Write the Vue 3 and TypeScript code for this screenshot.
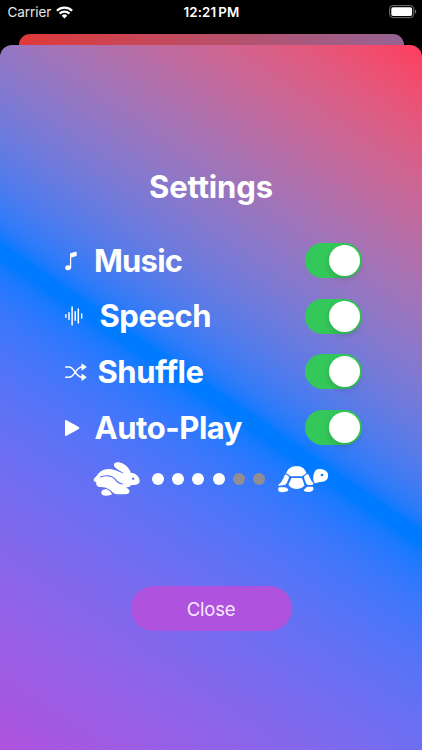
<script setup lang="ts">
import { reactive, ref } from 'vue'

interface Setting {
  id: 'music' | 'speech' | 'shuffle' | 'play'
  label: string
  on: boolean
}

const settings = reactive<Setting[]>([
  { id: 'music', label: 'Music', on: true },
  { id: 'speech', label: 'Speech', on: true },
  { id: 'shuffle', label: 'Shuffle', on: true },
  { id: 'play', label: 'Auto-Play', on: true },
])
const speed = ref(4)
const open = ref(true)
</script>

<template>
  <div class="screen">
    <header class="status">
      <div class="carrier">
        <span>Carrier</span>
        <svg class="wifi" viewBox="0 0 17 13">
          <g fill="none" stroke="#fff" stroke-width="2.3">
            <path d="M.9 4.7a10.8 10.8 0 0 1 15.2 0" />
            <path d="M3.6 7.6a7 7 0 0 1 9.8 0" />
          </g>
          <path d="M8.5 12.5 5.7 9.7a4 4 0 0 1 5.6 0z" fill="#fff" />
        </svg>
      </div>
      <span class="time">12:21<span class="meridiem">PM</span></span>
      <svg class="battery" viewBox="0 0 28 14">
        <rect x=".6" y=".6" width="24.2" height="12" rx="3.4" fill="none" stroke="#737373" />
        <rect x="2.3" y="2.2" width="20.8" height="8.8" rx="1.8" fill="#fff" />
        <path d="M26 4.6c1.7.7 1.7 3.3 0 4z" fill="#737373" />
      </svg>
    </header>
    <div class="behind"></div>
    <main v-if="open" class="sheet">
      <h1>Settings</h1>
      <section class="rows">
        <div v-for="s in settings" :key="s.id" class="row" :class="s.id">
          <svg v-if="s.id === 'music'" class="icon" viewBox="0 0 12 20">
            <ellipse cx="3.1" cy="16.7" rx="3" ry="2.5" transform="rotate(-12 3.1 16.7)" />
            <path d="M5 16.8V3.1Q5 2.2 6 2L10.7.8Q11.7.6 11.7 1.5V4.3Q11.7 5 10.9 5.2L6.2 6.4V16.8z" />
          </svg>
          <svg v-else-if="s.id === 'speech'" class="icon" viewBox="0 0 18 20">
            <path d="M.9 8.7v2.6M4 6.7v6.8M7.1 1v18M10.2 5.8v8.4M13.3 3v14M16.7 8v4" fill="none" stroke="#fff" stroke-width="1.5" stroke-linecap="round" />
          </svg>
          <svg v-else-if="s.id === 'shuffle'" class="icon" viewBox="0 0 22 18">
            <path d="M.6 4H4C9.7 4 10.7 14.3 17 14.3M.6 14.3H4C9.7 14.3 10.7 4 17 4" fill="none" stroke="#fff" stroke-width="1.5" stroke-linecap="round" />
            <path d="M16.5 1.2Q16.5.2 17.3.7L21.2 3.5Q21.8 4 21.2 4.5L17.3 7.3Q16.5 7.8 16.5 6.8zM16.5 11.5Q16.5 10.5 17.3 11L21.2 13.8Q21.8 14.3 21.2 14.8L17.3 17.6Q16.5 18 16.5 17.1z" />
          </svg>
          <svg v-else class="icon" viewBox="0 0 15 16">
            <path d="M0 1.2Q0-.5 1.6.3L13.7 7Q15 8 13.7 9L1.6 15.7Q0 16.5 0 14.8z" />
          </svg>
          <span class="label">{{ s.label }}</span>
          <button class="toggle" :class="{ on: s.on }" role="switch" :aria-checked="s.on" @click="s.on = !s.on">
            <i class="knob"></i>
          </button>
        </div>
      </section>
      <section class="speed">
        <svg class="rabbit" viewBox="24 18 144 108">
          <mask id="rabbit-cut">
            <rect x="24" y="18" width="144" height="108" fill="#fff" />
            <g fill="none" stroke="#000" stroke-width="3.600" stroke-linecap="round">
              <path d="M46 66C62 60 80 61 89 71C95 80 101 86 112 87" />
              <path d="M94 43C101 48 107 52 114 54" stroke-width="2.500" />
            </g>
            <circle cx="144.500" cy="71" r="3.600" fill="#000" />
          </mask>
          <g mask="url(#rabbit-cut)">
            <path d="M87 27C94 16 118 25 128 37C134 44 136 49 137 53C151 53 164 65 164 78C164 87 154 91 140 90C134 96 128 98 119 98C127 98 136 103 133 112C131 119 119 118 108 118H97C88 118 82 112 77 106C68 98 54 95 41 96C34 93 32 86 34 81C27 81 24 75 28 70C34 65 37 58 45 51C54 42 72 40 86 44C96 47 103 51 112 52C102 46 84 38 87 27Z" />
            <path d="M49 112C49 105 60 101 68 104C75 107 77 111 81 118C77 122 62 124 54 121C50 119 49 116 49 112Z" />
          </g>
        </svg>
        <div class="dots">
          <i v-for="n in 6" :key="n" class="dot" :class="{ off: n > speed }" @click="speed = n"></i>
        </div>
        <svg class="turtle" viewBox="21 27 159 84">
          <path d="M49 50C57 34 67 31 80 31C94 31 103 36 109 50Q110 53 106 54L99 59Q97 61 94 61H65Q62 61 60 59L52 54Q48 52 49 50Z" />
          <path d="M45 56Q46 54 49 56L55 60Q58 62 57 65L50 82Q48 87 43 87L28 89Q23 89 25 86C33 82 38 71 45 56Z" />
          <path d="M66 66H93Q96 66 97 69L103 86Q104 89 101 91C91 102 69 102 59 91Q54 88 56 85L63 69Q64 66 66 66Z" />
          <path d="M106 58L111 55Q114 53 116 57C120 66 123 74 130 81Q132 86 126 87H114Q110 86 108 82L102 65Q101 61 106 58Z" />
          <path d="M27 94H44Q50 94 54 99Q57 105 51 106C43 110 28 109 25 104Q23 97 27 94Z" />
          <path d="M113 92H127Q132 94 130 101C126 109 111 109 104 106Q99 103 105 98Q108 93 113 92Z" />
          <path fill-rule="evenodd" d="M137 43C146 35 167 39 173 51C176 61 174 70 164 76C154 78 145 78 137 82Q132 82 131 76C128 66 130 51 137 43ZM160 57A4 4 0 1 0 152 57A4 4 0 1 0 160 57Z" />
        </svg>
      </section>
      <button class="close" @click="open = false">Close</button>
    </main>
  </div>
</template>

<style>
body {
  background: #000;
}
</style>

<style scoped>
.screen {
  display: flex;
  flex-direction: column;
  width: 422px;
  height: 750px;
  overflow: hidden;
  background: #000;
  color: #fff;
  font-family: Inter, Roboto, sans-serif;
}
svg {
  display: block;
  fill: #fff;
}
button {
  border: 0;
  padding: 0;
  font-family: inherit;
  color: inherit;
}
.status {
  display: grid;
  grid-template-columns: 1fr auto 1fr;
  align-items: center;
  height: 24px;
  flex: none;
  margin-bottom: 10px;
  padding: 0 5.500px 0 7.500px;
  box-sizing: border-box;
  font-size: 13.500px;
}
.carrier {
  display: flex;
  align-items: center;
  gap: 5px;
  color: #e6e6e6;
  letter-spacing: -0.08px;
}
.wifi {
  width: 17px;
  height: 13px;
}
.time {
  margin-right: 1px;
  font-weight: 600;
  font-size: 13.300px;
  letter-spacing: 0.15px;
}
.meridiem {
  margin-left: 2px;
}
.battery {
  width: 28px;
  height: 14px;
  justify-self: end;
}
.behind {
  flex: none;
  height: 22px;
  margin: 0 18px 0 19px;
  border-radius: 11px 11px 0 0;
  background: linear-gradient(90deg, #e0393a, #956494);
}
.sheet {
  display: flex;
  flex-direction: column;
  align-items: center;
  flex: none;
  height: 705px;
  margin-top: -11px;
  border-radius: 12px 12px 0 0;
  background: linear-gradient(in oklab 214.3deg, #ff3b5c 0%, #007aff 49%, #007aff 50.5%, #af52de 100%);
}
h1 {
  margin: 123px 0 0;
  font-size: 31px;
  line-height: 38px;
  font-weight: 700;
  letter-spacing: -0.15px;
}
.rows {
  width: 297px;
  margin-top: 27px;
  padding-left: 4px;
}
.row {
  display: flex;
  align-items: center;
  height: 55.600px;
}
.icon {
  flex: none;
}
.music .icon {
  width: 12px;
  height: 20px;
  margin-right: 17.500px;
}
.speech .icon {
  width: 18px;
  height: 20px;
  margin-right: 17px;
}
.shuffle .icon {
  width: 22px;
  height: 18px;
  margin-right: 11px;
}
.play .icon {
  width: 15px;
  height: 16px;
  margin-right: 15px;
}
.label {
  font-size: 31px;
  line-height: 38px;
  font-weight: 700;
  letter-spacing: -0.45px;
  white-space: nowrap;
}
.music .label {
  letter-spacing: -0.8px;
}
.toggle {
  display: flex;
  box-sizing: border-box;
  width: 57px;
  height: 35px;
  margin-left: auto;
  padding: 2px;
  border-radius: 18px;
  background: #8e8e93;
}
.toggle.on {
  justify-content: flex-end;
  background: #34c759;
}
.knob {
  width: 31px;
  height: 31px;
  border-radius: 50%;
  background: #fff;
  box-shadow: 0 3px 6px rgba(0, 0, 0, 0.15);
}
.speed {
  display: flex;
  align-items: center;
  height: 36px;
  margin-top: 6px;
  padding-left: 1px;
}
.rabbit {
  width: 48px;
  height: 36px;
}
.dots {
  display: flex;
  gap: 8.250px;
  margin: 0 12px 0 11px;
}
.dot {
  width: 12px;
  height: 12px;
  border-radius: 50%;
  background: #fff;
}
.dot.off {
  background: #8e8e93;
}
.turtle {
  width: 53px;
  height: 28px;
}
.close {
  width: 161px;
  height: 45px;
  margin-top: 89px;
  border-radius: 23px;
  background: #af52de;
  color: #f8e9ff;
  font-size: 18.500px;
  letter-spacing: -0.2px;
}
</style>
